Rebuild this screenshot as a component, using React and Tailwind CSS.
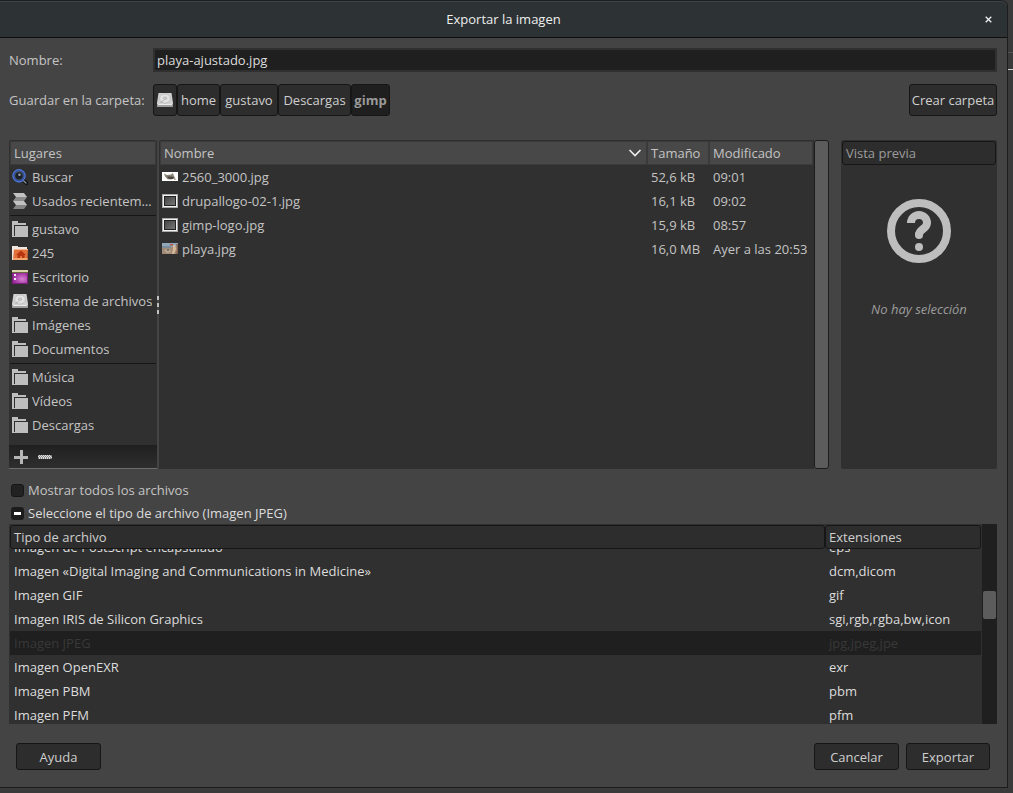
const BUTTON =
  "flex items-center justify-center rounded-[3px] border border-[#161616] bg-[#2d2d2d] text-[#cfcfcf]";

function SearchIcon() {
  return (
    <svg className="h-4 w-4 shrink-0" viewBox="0 0 16 16">
      <path d="M11 11l3.500 3.200" stroke="#0e1114" strokeWidth="3.600" strokeLinecap="round" />
      <path d="M11 11.200l3 2.800" stroke="#8b9198" strokeWidth="1.300" strokeLinecap="round" />
      <circle cx="7" cy="6.800" r="5.700" fill="#4a5562" stroke="#2a4fb5" strokeWidth="2" />
      <circle cx="7" cy="6.800" r="6.200" fill="none" stroke="#7f9fe8" strokeWidth=".6" />
      <circle cx="7" cy="6.800" r="3.600" fill="#1a2028" />
      <circle cx="7.500" cy="5.800" r="1.300" fill="#98a1ab" />
    </svg>
  );
}

function RecentIcon() {
  return (
    <svg className="h-4 w-4 shrink-0" viewBox="0 0 16 16">
      <path d="M1 0h11l3 4H4z" fill="#c2c2c2" />
      <path d="M4 4h11l-3 4H1z" fill="#8c8c8c" />
      <path d="M1 8h11l3 4H4z" fill="#c2c2c2" />
      <path d="M4 12h11l-3 4H1z" fill="#858585" />
    </svg>
  );
}

function FolderIcon() {
  return (
    <svg className="h-4 w-4 shrink-0" viewBox="0 0 16 16" shapeRendering="crispEdges">
      <path d="M0 0h6v2h8v2H2v12H0z" fill="#bebebe" />
      <path d="M2 15h1v1H2z" fill="#bebebe" />
      <path d="M3 5h13v11H3z" fill="#bebebe" />
    </svg>
  );
}

function HomeIcon() {
  return (
    <svg className="h-4 w-4 shrink-0" viewBox="0 0 16 16">
      <path d="M0 1h6v1h9v3H2v10H0z" fill="#efe6df" />
      <path d="M2 4h14l-.5 11H1z" fill="#e0713a" />
      <path d="M2 4h14v1H2z" fill="#f7b48d" />
      <path d="M1.500 13h14v2H1z" fill="#f3a66c" />
      <path d="M9 5.500L4 10h1.500v3H8v-2h2v2h2.500v-3H14z" fill="#b8360f" />
    </svg>
  );
}

function DesktopIcon() {
  return (
    <svg className="h-4 w-4 shrink-0" viewBox="0 0 16 16">
      <defs>
        <radialGradient id="desk" cx=".65" cy=".6" r=".7">
          <stop offset="0" stopColor="#d883d3" />
          <stop offset="1" stopColor="#952396" />
        </radialGradient>
      </defs>
      <rect y="1" width="16" height="14" fill="#7d1f7f" />
      <rect y="1" width="16" height="2" fill="#d8d5a8" />
      <rect y="3" width="16" height="1" fill="#6a6741" />
      <rect x="1" y="4" width="14" height="10" fill="url(#desk)" />
      <path d="M2 5h2v2H2zM2 9h2v2H2z" fill="#f6e6f6" />
    </svg>
  );
}

function DriveIcon() {
  return (
    <svg className="h-4 w-4 shrink-0" viewBox="0 0 16 16">
      <path d="M1.500 1h13l1.500 10v4H0v-4z" fill="#d2d2d2" />
      <path d="M0 12h16v3H0z" fill="#9e9e9e" />
      <path d="M1 12h14v1H1z" fill="#ececec" />
      <ellipse cx="8" cy="6.500" rx="5.400" ry="4.600" fill="#e2e2e2" stroke="#b4b4b4" strokeWidth=".7" />
      <ellipse cx="8" cy="6.200" rx="1.700" ry="1.300" fill="#cfcfcf" stroke="#a6a6a6" strokeWidth=".6" />
      <path d="M3.500 10.500l3-2" stroke="#a0a0a0" strokeWidth=".8" />
    </svg>
  );
}

function LogoThumb() {
  return (
    <svg className="h-4 w-4 shrink-0" viewBox="0 0 16 16">
      <rect y="3" width="16" height="9" fill="#fff" />
      <path d="M2 4.500l3 1.500 4-.5 2-1.500 1 3 1.500 2.500-2 0-2 1-4-.3-2.500-2.700z" fill="#8a867a" />
      <path d="M5 7.500h4l3 .5-1 2H7z" fill="#4c4842" />
      <path d="M11 9.500l3 .5-1 1z" fill="#8a6a4a" />
    </svg>
  );
}

function ImageThumb() {
  return (
    <svg className="h-4 w-4 shrink-0" viewBox="0 0 16 16" shapeRendering="crispEdges">
      <defs>
        <linearGradient id="thumb" x2="1" y2="1">
          <stop offset="0" stopColor="#444" />
          <stop offset="1" stopColor="#777" />
        </linearGradient>
      </defs>
      <rect y="1" width="16" height="14" fill="#aaa" />
      <rect x="1" y="2" width="14" height="12" fill="#f2f2f2" />
      <rect x="2" y="3" width="12" height="10" fill="#222" />
      <rect x="3" y="4" width="10" height="8" fill="url(#thumb)" />
    </svg>
  );
}

function BeachThumb() {
  return (
    <svg className="h-4 w-4 shrink-0" viewBox="0 0 16 16">
      <rect y="2" width="16" height="11" fill="#a08b78" />
      <rect y="2" width="16" height="4" fill="#93a5b8" />
      <rect y="5" width="9" height="2" fill="#7b8c9a" />
      <path d="M8 3h3v1.500H8z" fill="#b4503f" />
      <path d="M11 4h2l1 4-2 5h-2l1-5z" fill="#d9bb9a" />
      <path d="M14 3h2v10h-2l1-5z" fill="#8b6450" />
      <path d="M2 9l5-1 2 3-4 1z" fill="#bfa892" />
      <path d="M5 8h2v2H5z" fill="#6f736c" />
    </svg>
  );
}

const PLACES = [
  [
    ["Buscar", SearchIcon],
    ["Usados recientemente", RecentIcon],
  ],
  [
    ["gustavo", FolderIcon],
    ["245", HomeIcon],
    ["Escritorio", DesktopIcon],
    ["Sistema de archivos", DriveIcon],
    ["Imágenes", FolderIcon],
    ["Documentos", FolderIcon],
  ],
  [
    ["Música", FolderIcon],
    ["Vídeos", FolderIcon],
    ["Descargas", FolderIcon],
  ],
];

const FILES = [
  ["2560_3000.jpg", "52,6 kB", "09:01", LogoThumb],
  ["drupallogo-02-1.jpg", "16,1 kB", "09:02", ImageThumb],
  ["gimp-logo.jpg", "15,9 kB", "08:57", ImageThumb],
  ["playa.jpg", "16,0 MB", "Ayer a las 20:53", BeachThumb],
];

const TYPES = [
  ["Imagen «Digital Imaging and Communications in Medicine»", "dcm,dicom"],
  ["Imagen GIF", "gif"],
  ["Imagen IRIS de Silicon Graphics", "sgi,rgb,rgba,bw,icon"],
  ["Imagen JPEG", "jpg,jpeg,jpe"],
  ["Imagen OpenEXR", "exr"],
  ["Imagen PBM", "pbm"],
  ["Imagen PFM", "pfm"],
];

function Places() {
  return (
    <nav className="flex w-[148px] shrink-0 flex-col rounded-t-[2px] bg-[#303030]" aria-label="Lugares">
      <div className="mx-px mt-px h-6 border border-[#3a3a3a] bg-[#484848] px-[3px] leading-[22px]">Lugares</div>
      <div className="flex-1">
        {PLACES.map((group, i) => (
          <ul key={i} className={i ? "mx-px mt-[2px] border-t border-[#161616] pt-px" : "mx-px"}>
            {group.map(([name, Icon]) => (
              <li key={name}>
                <a href="#" className="flex h-6 items-center gap-1 pr-[2px] pl-[2px]">
                  <Icon />
                  <span className="truncate">{name}</span>
                </a>
              </li>
            ))}
          </ul>
        ))}
      </div>
      <div className="flex h-6 items-center gap-2 border-b border-[#6c6c6c] bg-linear-to-b from-[#202020] to-[#2e2e2e] px-1">
        <button aria-label="Añadir" className="flex h-4 w-4 items-center justify-center">
          <svg className="h-4 w-4" viewBox="0 0 16 16" shapeRendering="crispEdges">
            <path d="M1 7h14v3H1zM7 1h3v14H7z" fill="#b5b5b5" />
          </svg>
        </button>
        <button aria-label="Quitar" className="flex h-4 w-4 items-center justify-center">
          <svg className="h-4 w-4" viewBox="0 0 16 16">
            <rect x="1" y="6" width="14" height="4" rx="1" fill="#8a8a8a" />
            <path d="M2 6.500h12M1 7.500h14M2 8.500h13M2 9.500h12" stroke="#e0e0e0" strokeDasharray="1 1" />
          </svg>
        </button>
      </div>
    </nav>
  );
}

const FILE_TH = "h-6 border border-[#3a3a3a] bg-[#484848] p-0 text-left font-normal";

function Files() {
  return (
    <div className="min-w-0 flex-1 rounded-tl-[2px] bg-[#303030] pt-px pr-px pl-px">
      <table className="w-full table-fixed border-separate border-spacing-0">
        <thead>
          <tr>
            <th className={FILE_TH}>
              <button className="flex h-[22px] w-full items-center justify-between pr-1 pl-[3px]">
                Nombre
                <svg className="h-3 w-3.5" viewBox="0 0 14 12">
                  <path d="M1.500 3l5.500 5.500L12.500 3" fill="none" stroke="#eee" strokeWidth="1.600" />
                </svg>
              </button>
            </th>
            <th className={FILE_TH + " w-[62px]"}>
              <button className="block h-[22px] px-[3px]">Tamaño</button>
            </th>
            <th className={FILE_TH + " w-[104px]"}>
              <button className="block h-[22px] px-[3px]">Modificado</button>
            </th>
          </tr>
        </thead>
        <tbody>
          {FILES.map(([name, size, date, Icon]) => (
            <tr key={name}>
              <td className="h-6 p-0">
                <div className="flex items-center gap-1 pl-[2px]">
                  <Icon />
                  {name}
                </div>
              </td>
              <td className="p-0 pl-1 whitespace-nowrap">{size}</td>
              <td className="p-0 pl-1 whitespace-nowrap">{date}</td>
            </tr>
          ))}
        </tbody>
      </table>
    </div>
  );
}

function Preview() {
  return (
    <aside className="flex w-[156px] shrink-0 flex-col items-center rounded-[2px] bg-[#303030] p-px text-[#9c9c9c]">
      <div className="h-6 w-full rounded-[3px] border border-[#161616] bg-[#2d2d2d] px-[3px] leading-[22px]">
        Vista previa
      </div>
      <svg className="mt-[34px] h-16 w-16" viewBox="0 0 64 64">
        <circle cx="32" cy="32" r="28" fill="none" stroke="#bebebe" strokeWidth="8" />
        <path d="M24 24a8 8 0 0 1 16 0c0 6-8 6-8 12" fill="none" stroke="#bebebe" strokeWidth="8" />
        <circle cx="32" cy="36" r="4" fill="#bebebe" />
        <circle cx="32" cy="48" r="4" fill="#bebebe" />
      </svg>
      <p className="mt-[37px] italic">No hay selección</p>
    </aside>
  );
}

const TYPE_TH = "h-6 rounded-[3px] border border-[#161616] bg-[#2d2d2d] p-0 text-left font-normal text-[#cfcfcf]";

function FileTypes() {
  return (
    <div className="flex h-[200px] bg-[#303030] text-[#dcdcdc]">
      <div className="min-w-0 flex-1 overflow-hidden pt-px pr-px pl-px">
        <table className="w-full table-fixed border-separate border-spacing-0">
          <thead>
            <tr>
              <th className={TYPE_TH}>
                <button className="block h-[22px] px-[3px]">Tipo de archivo</button>
              </th>
              <th className={TYPE_TH + " w-[156px]"}>
                <button className="block h-[22px] px-[3px]">Extensiones</button>
              </th>
            </tr>
          </thead>
          <tbody>
            <tr>
              {["Imagen de PostScript encapsulado", "eps"].map((text) => (
                <td key={text} className="p-0 pl-1">
                  <div className="flex h-[10px] items-end overflow-hidden">
                    <span className="h-6 leading-6">{text}</span>
                  </div>
                </td>
              ))}
            </tr>
            {TYPES.map(([name, ext]) => (
              <tr key={name} className={name === "Imagen JPEG" ? "bg-[#1f1f1f] text-[#383838]" : ""}>
                <td className="h-6 p-0 pl-1">{name}</td>
                <td className="h-6 p-0 pl-1">{ext}</td>
              </tr>
            ))}
          </tbody>
        </table>
      </div>
      <div className="w-[15px] shrink-0 bg-[#1f1f1f] px-px pt-[67px]">
        <div className="h-7 rounded-[2px] bg-[#5c5c5c]" />
      </div>
    </div>
  );
}

export default function App() {
  return (
    <div className="relative flex min-h-screen flex-col bg-[#3a3a3a] pr-[5px] pb-[5px] font-['Open_Sans',sans-serif] text-[13px] leading-[18px] text-[#c4c4c4]">
      <div className="absolute top-[52px] right-0 h-px w-[5px] bg-[#555]" />
      <div className="absolute top-[69px] right-0 h-px w-[5px] bg-[#d0d0d0]" />
      <div className="flex flex-1 flex-col rounded-tr-[6px] border-r border-b border-[#1c1c1c] bg-[#444]">
        <header className="grid h-[38px] grid-cols-[38px_1fr_38px] items-center rounded-tr-[6px] border-t border-b border-t-[#1d2021] border-b-[#0e0e0e] bg-[#2d3234] text-[#eee] shadow-[inset_0_1px_0_#3e4345]">
          <h1 className="col-start-2 text-center">Exportar la imagen</h1>
          <button aria-label="Cerrar" className="flex h-8 items-center justify-center">
            <svg className="h-[7px] w-[7px]" viewBox="0 0 7 7">
              <path d="M.7.7l5.600 5.600M6.300.7L.7 6.300" stroke="#eee" strokeWidth="1.300" />
            </svg>
          </button>
        </header>

        <main className="flex flex-1 flex-col pt-[10px] pr-[10px] pb-[17px] pl-[9px]">
          <div className="flex items-center">
            <label htmlFor="name" className="w-36 shrink-0">
              Nombre:
            </label>
            <input
              id="name"
              defaultValue="playa-ajustado.jpg"
              className="h-6 min-w-0 flex-1 border-2 border-[#303030] bg-[#1f1f1f] px-[2px] text-[#dcdcdc] outline-none"
            />
          </div>

          <div className="mt-3 flex items-center">
            <span className="w-36 shrink-0">Guardar en la carpeta:</span>
            <button aria-label="Sistema de archivos" className={BUTTON + " h-8 w-6"}>
              <DriveIcon />
            </button>
            <button className={BUTTON + " h-8 w-[43px]"}>home</button>
            <button className={BUTTON + " h-8 w-[58px]"}>gustavo</button>
            <button className={BUTTON + " h-8 w-[73px]"}>Descargas</button>
            <button className="flex h-8 w-[39px] items-center justify-center rounded-[3px] border border-[#161616] bg-[#1f1f1f] font-bold text-[#9a9a9a]">
              gimp
            </button>
            <button className={BUTTON + " ml-auto h-8 w-[88px] whitespace-nowrap"}>Crear carpeta</button>
          </div>

          <div className="mt-6 flex min-h-[329px] flex-1">
            <Places />
            <div className="flex w-[2px] shrink-0 flex-col items-center justify-center gap-[3px]">
              <span className="h-1 w-[2px] bg-[#c0c0c0]" />
              <span className="h-1 w-[2px] bg-[#c0c0c0]" />
              <span className="h-1 w-[2px] bg-[#c0c0c0]" />
            </div>
            <Files />
            <div className="mr-3 w-[15px] shrink-0 rounded-[3px] border border-[#1c1c1c] bg-[#5c5c5c]" />
            <Preview />
          </div>

          <label className="mt-[9px] flex h-6 items-center gap-1 self-start pl-[2px]">
            <input
              type="checkbox"
              className="h-[13px] w-[13px] appearance-none rounded-[3px] border border-[#161616] bg-[#222]"
            />
            Mostrar todos los archivos
          </label>
          <button aria-expanded="true" className="flex h-[22px] items-center gap-1 self-start pl-[2px] text-[#dcdcdc]">
            <span className="flex h-[13px] w-[13px] items-center justify-center rounded-[3px] bg-[#1c1c1c]">
              <span className="h-[3px] w-[7px] bg-white" />
            </span>
            Seleccione el tipo de archivo (Imagen JPEG)
          </button>
          <FileTypes />

          <footer className="mt-[19px] flex gap-[7px] pr-[7px] pl-[7px]">
            <button className={BUTTON + " mr-auto h-[27px] w-[85px]"}>Ayuda</button>
            <button className={BUTTON + " h-[27px] w-[85px]"}>Cancelar</button>
            <button className={BUTTON + " h-[27px] w-[84px]"}>Exportar</button>
          </footer>
        </main>
      </div>
    </div>
  );
}
